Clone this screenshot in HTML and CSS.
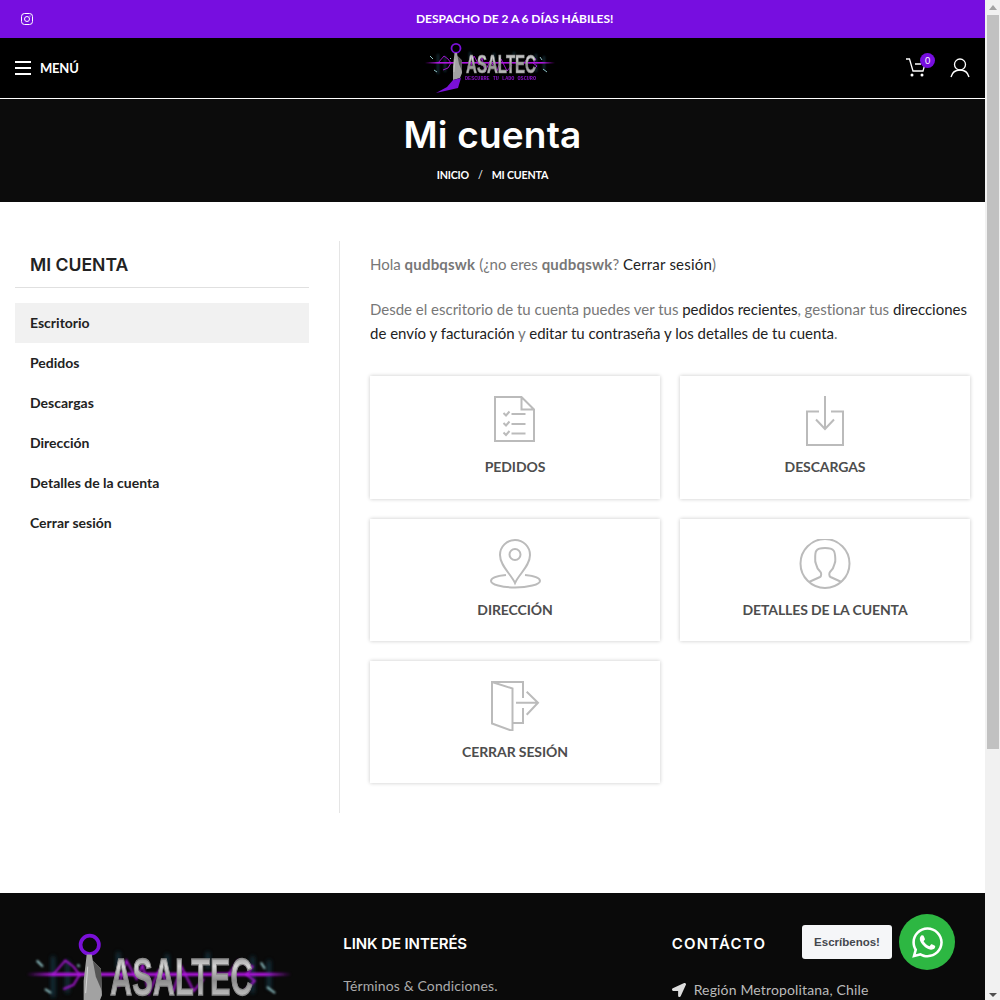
FILE: index.html
```html
<!DOCTYPE html>
<html lang="es">
<head>
<meta charset="utf-8">
<title>Mi cuenta</title>
<link rel="stylesheet" href="styles.css">
</head>
<body>
<svg class="defs" width="0" height="0" aria-hidden="true">
  <defs>
    <linearGradient id="metal" x1="0" y1="0" x2="0" y2="1">
      <stop offset="0" stop-color="#6f6f6f"/>
      <stop offset=".3" stop-color="#d4d4d4"/>
      <stop offset=".55" stop-color="#8d8d8d"/>
      <stop offset=".8" stop-color="#bdbdbd"/>
      <stop offset="1" stop-color="#555"/>
    </linearGradient>
    <linearGradient id="beam" x1="0" y1="0" x2="1" y2="0">
      <stop offset="0" stop-color="#b015e0" stop-opacity="0"/>
      <stop offset=".1" stop-color="#b015e0"/>
      <stop offset=".9" stop-color="#b015e0"/>
      <stop offset="1" stop-color="#b015e0" stop-opacity="0"/>
    </linearGradient>
    <filter id="soft" x="-10%" y="-50%" width="120%" height="200%"><feGaussianBlur stdDeviation=".45"/></filter>
    <filter id="softer" x="-10%" y="-50%" width="120%" height="200%"><feGaussianBlur stdDeviation="1"/></filter>
    <symbol id="logo" viewBox="0 0 132 54">
      <path class="cyan" filter="url(#softer)" d="M14 12v20M21 14v16M46 10v8M70 11v8M90 10v8M112 12v18M120 14v14"/>
      <rect class="glow" x="1" y="20" width="130" height="1.600" filter="url(#soft)"/>
      <path class="spark" filter="url(#soft)" d="M14 21l6-7 4 3 3 4-3 5-5 2M100 21l5-7 7 3-3 4 4 3-5 5M46 27l4-13 5 9 3-7 3 14 5-11 7 10 4-12 6 12 5-6"/>
      <path class="ice" filter="url(#soft)" d="M6 14l3 3M10 28l3 2M116 15l2 3M119 27l4 3M26 16l1 1"/>
      <circle class="ring" cx="32" cy="6.300" r="4.500"/>
      <path class="blade" d="M30.500 11h2.500l.5 3 4 4 .5 13-2 5-7 2v-14z"/>
      <path class="facet" d="M33.500 14l4 4 .5 11-3-7z"/>
      <path class="edge" d="M31 17l-1 13"/>
      <path class="tip" d="M37 36l-3 10-22 5 11-6 6-7z"/>
      <text class="logo-name" x="42" y="31" textLength="70" lengthAdjust="spacingAndGlyphs">ASALTEC</text>
      <text class="logo-sub" x="41" y="38" textLength="71" lengthAdjust="spacingAndGlyphs">DESCUBRE TU LADO OSCURO</text>
    </symbol>
  </defs>
</svg>
<div class="window">
  <div class="page">
    <div class="topbar">
      <svg class="insta" viewBox="0 0 12 12" width="12" height="12"><rect x=".5" y=".5" width="11" height="11" rx="3"/><circle cx="6" cy="6" r="2.500"/><circle class="dot" cx="9" cy="3" r=".6"/></svg>
      <span class="topbar-text">DESPACHO DE 2 A 6 DÍAS HÁBILES!</span>
    </div>
    <header class="header">
      <div class="menu">
        <span class="burger"><i></i><i></i><i></i></span>
        <span class="menu-text">MENÚ</span>
      </div>
      <svg class="logo-small" width="132" height="54"><use href="#logo"/></svg>
      <div class="tools">
        <div class="cart">
          <svg viewBox="0 0 22 20" width="22" height="20"><path d="M1 1h3.500l3.500 12h10l2-7M10 6h6"/><circle class="wheel" cx="7" cy="17" r="1.500"/><circle class="wheel" cx="17" cy="17" r="1.500"/></svg>
          <span class="badge">0</span>
        </div>
        <svg class="user" viewBox="0 0 20 20" width="20" height="20"><circle cx="10" cy="6.500" r="5.500"/><path d="M1 19c1-4 4-7 9-7s8 3 9 7"/></svg>
      </div>
    </header>
    <section class="title-band">
      <h1>Mi cuenta</h1>
      <div class="crumbs"><span>INICIO</span><span class="slash">/</span><span>MI CUENTA</span></div>
    </section>
    <main class="account">
      <aside class="side">
        <h2>MI CUENTA</h2>
        <nav class="side-nav">
          <a class="side-link is-active">Escritorio</a>
          <a class="side-link">Pedidos</a>
          <a class="side-link">Descargas</a>
          <a class="side-link">Dirección</a>
          <a class="side-link">Detalles de la cuenta</a>
          <a class="side-link">Cerrar sesión</a>
        </nav>
      </aside>
      <section class="content">
        <p class="hello">Hola <b>qudbqswk</b> (¿no eres <b>qudbqswk</b>? <a>Cerrar sesión</a>)</p>
        <p class="intro">Desde el escritorio de tu cuenta puedes ver tus <a>pedidos recientes</a>, gestionar tus <a>direcciones de envío y facturación</a> y <a>editar tu contraseña y los detalles de tu cuenta</a>.</p>
        <div class="cards">
          <a class="card">
            <svg class="ico" viewBox="0 0 60 50" width="60" height="50"><path d="M10 1h26.500l12.500 12.500v31.500H10zM36.500 1v12.500h12.500M26.500 18h14M26.500 28h14M26.500 37.500h14M18.500 17l2.500 2.500 3.500-4M18.500 27l2.500 2.500 3.500-4M18.500 36.500l2.500 2.500 3.500-4"/></svg>
            <span>PEDIDOS</span>
          </a>
          <a class="card">
            <svg class="ico" viewBox="0 0 60 50" width="60" height="50"><path d="M24 15.500h-12v33.500h36v-33.500h-12M30 0v33M21 23.500l9 9.500 9-9.500"/></svg>
            <span>DESCARGAS</span>
          </a>
          <a class="card">
            <svg class="ico" viewBox="0 0 60 50" width="60" height="50"><path d="M30 44C26 35 15 27 15 16a15 15 0 0 1 30 0C45 27 34 35 30 44z"/><circle cx="30" cy="15.500" r="5.500"/><path d="M21 36C11 37 6 39 6 42c0 3.500 11 6.500 24 6.500s25-3 25-6.500c0-3-5-5-15-6"/></svg>
            <span>DIRECCIÓN</span>
          </a>
          <a class="card">
            <svg class="ico" viewBox="0 0 60 50" width="60" height="50"><circle cx="30" cy="24.500" r="24.500"/><path d="M14 43l11-5c1.500-.8 1.500-4 .5-5-2-2-4-5-4.500-8-.5-1-1-3-.8-5C20 13 20 9 30 9s10 4 10.300 11c.2 2-.3 4-.8 5-.5 3-2.500 6-4.500 8-1 1-1 4.200.5 5l11 5"/></svg>
            <span>DETALLES DE LA CUENTA</span>
          </a>
          <a class="card">
            <svg class="ico" viewBox="0 0 60 50" width="60" height="50"><path d="M7 1l20.500 6.500v42.500L7 42.500zM7 1h31v16M38 27v15h-10M31 21.700h22M41.700 10.700l11.300 11-11.300 12"/></svg>
            <span>CERRAR SESIÓN</span>
          </a>
        </div>
      </section>
    </main>
    <footer class="footer">
      <div class="foot-col">
        <svg class="logo-big" width="270" height="110"><use href="#logo"/></svg>
      </div>
      <div class="foot-col">
        <h3 class="foot-head-link">LINK DE INTERÉS</h3>
        <p class="foot-link">Términos &amp; Condiciones.</p>
      </div>
      <div class="foot-col">
        <h3 class="foot-head-contact">CONTÁCTO</h3>
        <p class="foot-place">
          <svg viewBox="0 0 512 512" width="14" height="14"><path d="M444.520 3.520L28.740 195.420c-47.970 22.390-31.980 92.750 19.190 92.750h175.910v175.910c0 51.170 70.360 67.170 92.750 19.190l191.900-415.780c15.990-38.390-25.590-79.970-63.970-63.970z"/></svg>
          <span>Región Metropolitana, Chile</span>
        </p>
      </div>
    </footer>
    <div class="chat">
      <span class="chat-label">Escríbenos!</span>
      <span class="chat-btn">
        <svg viewBox="0 0 448 512" width="31" height="35"><path d="M380.900 97.100C339 55.100 283.200 32 223.900 32c-122.400 0-222 99.600-222 222 0 39.100 10.200 77.300 29.600 111L0 480l117.700-30.900c32.400 17.700 68.900 27 106.100 27h.1c122.300 0 224.100-99.600 224.100-222 0-59.300-25.200-115-67.100-157zm-157 341.600c-33.200 0-65.700-8.900-94-25.700l-6.700-4-69.800 18.300L72 359.200l-4.400-7c-18.500-29.400-28.200-63.300-28.200-98.200 0-101.700 82.800-184.500 184.600-184.500 49.300 0 95.600 19.200 130.400 54.100 34.800 34.900 56.200 81.200 56.100 130.500 0 101.800-84.900 184.600-186.600 184.600zm101.200-138.200c-5.500-2.800-32.800-16.200-37.900-18-5.100-1.900-8.800-2.800-12.500 2.800-3.700 5.600-14.300 18-17.600 21.800-3.200 3.700-6.500 4.200-12 1.400-32.600-16.300-54-29.100-75.500-66-5.700-9.800 5.700-9.100 16.300-30.300 1.800-3.700.9-6.900-.5-9.700-1.400-2.800-12.500-30.100-17.100-41.200-4.500-10.800-9.100-9.300-12.500-9.500-3.200-.2-6.900-.2-10.600-.2-3.700 0-9.700 1.400-14.800 6.900-5.100 5.600-19.400 19-19.400 46.300 0 27.300 19.900 53.700 22.600 57.400 2.800 3.700 39.100 59.700 94.800 83.800 35.200 15.200 49 16.500 66.600 13.900 10.700-1.600 32.800-13.400 37.400-26.400 4.600-13 4.600-24.100 3.200-26.400-1.300-2.500-5-3.900-10.500-6.600z"/></svg>
      </span>
    </div>
  </div>
  <div class="scrollbar">
    <span class="arrow-up"></span>
    <span class="thumb"></span>
    <span class="arrow-down"></span>
  </div>
</div>
</body>
</html>
```
FILE: styles.css
```css
* { box-sizing: border-box; }
html, body { margin: 0; height: 1000px; overflow: hidden; background: #fff; }
body { font-family: "Lato", sans-serif; font-size: 15px; color: #777; }
.defs { display: block; height: 0; }
.window { display: flex; height: 1000px; overflow: hidden; }
.page { position: relative; width: 985px; height: 1000px; overflow: hidden; flex: none; background: #fff; }

.scrollbar { width: 15px; height: 1000px; background: #f1f1f1; display: flex; flex-direction: column; align-items: center; }
.arrow-up { width: 0; height: 0; margin: 5px 0 5px; border-left: 4px solid transparent; border-right: 4px solid transparent; border-bottom: 5px solid #a3a3a3; }
.thumb { width: 12px; height: 734px; background: #c1c1c1; }
.arrow-down { width: 0; height: 0; margin-top: auto; margin-bottom: 3px; border-left: 4px solid transparent; border-right: 4px solid transparent; border-top: 4px solid #505050; }

.topbar { height: 38px; background: #770ee0; display: flex; align-items: center; padding-left: 21px; color: #fff; }
.insta { fill: none; stroke: #fff; stroke-width: 1; flex: none; }
.insta .dot { fill: #fff; stroke: none; }
.topbar-text { font-size: 12px; font-weight: 700; margin-left: 383px; padding-bottom: 2px; letter-spacing: -.06px; }

.header { height: 61px; background: #000; border-bottom: 1px solid #fff; display: flex; align-items: center; justify-content: space-between; padding: 0 15px; color: #fff; position: relative; }
.menu { display: flex; align-items: center; gap: 9px; font-size: 13px; font-weight: 700; }
.menu-text { padding-bottom: 1px; letter-spacing: -.2px; }
.burger { display: flex; flex-direction: column; gap: 4px; width: 16px; }
.burger i { display: block; height: 2px; background: #fff; }
.logo-small { position: absolute; left: 424px; top: 4px; filter: blur(.35px); }
.tools { display: flex; align-items: center; gap: 23px; }
.cart { position: relative; display: flex; }
.cart svg { fill: none; stroke: #fff; stroke-width: 1.3; }
.cart .wheel { fill: #fff; stroke: none; }
.badge { position: absolute; left: 15px; top: -5px; width: 15px; height: 15px; border-radius: 50%; background: #770ee0; font-size: 9px; line-height: 15px; text-align: center; color: #fff; }
.user { fill: none; stroke: #fff; stroke-width: 1.3; }

.glow { fill: url(#beam); }
.spark { stroke: #b015e0; stroke-width: .9; fill: none; }
.cyan { stroke: #1f4a5c; stroke-width: 1.2; fill: none; }
.ice { stroke: #9fd8dc; stroke-width: .9; fill: none; }
.ring { fill: none; stroke: #7a10d8; stroke-width: 1.800; }
.blade { fill: #a2a2a2; }
.facet { fill: #555; }
.edge { stroke: #e2e2e2; stroke-width: .4; fill: none; }
.tip { fill: #7a10d8; }
.logo-name { font-family: "Liberation Sans", sans-serif; font-weight: 700; font-size: 25px; fill: url(#metal); stroke: #8a8a8a; stroke-width: .7; }
.logo-sub { font-family: "Liberation Mono", monospace; font-weight: 700; font-size: 5px; fill: #8a12c8; }

.title-band { height: 103px; background: #0c0c0c; color: #fff; display: flex; flex-direction: column; align-items: center; padding-top: 14px; }
h1 { margin: 0; font-family: "Inter", sans-serif; font-weight: 600; font-size: 37px; letter-spacing: .2px; line-height: 44px; }
.crumbs { margin-top: 10px; font-size: 10.700px; font-weight: 700; line-height: 16px; letter-spacing: -.2px; display: flex; gap: 9px; }
.slash { font-weight: 400; }

.account { display: flex; margin: 39px 0 80px; padding: 0 15px; height: 572px; }
.side { width: 325px; flex: none; padding-right: 30px; border-right: 1px solid #e5e5e5; }
.side h2 { margin: 0 0 15px; padding: 12px 15px 10px; height: 47px; font-family: "Inter", sans-serif; font-weight: 600; font-size: 17.600px; line-height: 24px; color: #222; border-bottom: 1px solid #e0e0e0; }
.side-nav { display: flex; flex-direction: column; }
.side-link { height: 40px; line-height: 40px; padding: 0 15px; font-size: 14px; font-weight: 700; color: #222; }
.is-active { background: #f1f1f1; }

.content { flex: 1; padding-left: 30px; }
.content p { margin: 0; line-height: 24px; }
.content a { color: #222; }
.content b { font-weight: 700; color: #777; letter-spacing: .2px; }
.hello { padding-top: 11px; }
.hello a { letter-spacing: .2px; }
.intro { margin-top: 21px !important; letter-spacing: -.01px; }
.cards { display: grid; grid-template-columns: 290px 290px; grid-template-rows: 123px 122px 122px; gap: 20px; margin-top: 31px; }
.card { background: #fff; box-shadow: 0 0 4px rgba(0,0,0,.22); display: flex; flex-direction: column; align-items: center; padding-top: 20px; }
.ico { fill: none; stroke: #bbb; stroke-width: 2; flex: none; }
.card span { margin-top: 12px; font-size: 14px; font-weight: 700; line-height: 18px; letter-spacing: -.1px; color: #4d4d4d; }

.footer { background: #0a0a0a; height: 107px; padding-left: 15px; display: grid; grid-template-columns: repeat(3, 328.330px); color: #aaa; }
.foot-col { padding-top: 38px; overflow: hidden; }
.logo-big { display: block; margin: 1px 0 0 9px; height: 110px; filter: blur(.4px); }
.foot-col h3 { margin: 3px 0 0; font-family: "Inter", sans-serif; font-weight: 600; font-size: 15px; line-height: 20px; color: #fff; }
.foot-head-link { letter-spacing: -.1px; }
.foot-head-contact { letter-spacing: 1.200px; }
.foot-link { margin: 20px 0 0; font-size: 14px; line-height: 24px; letter-spacing: .12px; }
.foot-place { margin: 24px 0 0; display: flex; align-items: center; gap: 8px; font-size: 14px; line-height: 24px; letter-spacing: .15px; color: #bbb; }
.foot-place svg { fill: #ddd; flex: none; }

.chat { position: absolute; left: 802px; top: 914px; display: flex; align-items: center; gap: 7px; }
.chat-label { width: 90px; height: 34px; border-radius: 3px; background: #f5f6f8; color: #43464e; font-family: "Liberation Sans", sans-serif; font-size: 11.500px; font-weight: 700; line-height: 34px; text-align: center; }
.chat-btn { width: 56px; height: 56px; border-radius: 50%; background: #2db742; display: flex; align-items: center; justify-content: center; }
.chat-btn svg { fill: #fff; }
```
